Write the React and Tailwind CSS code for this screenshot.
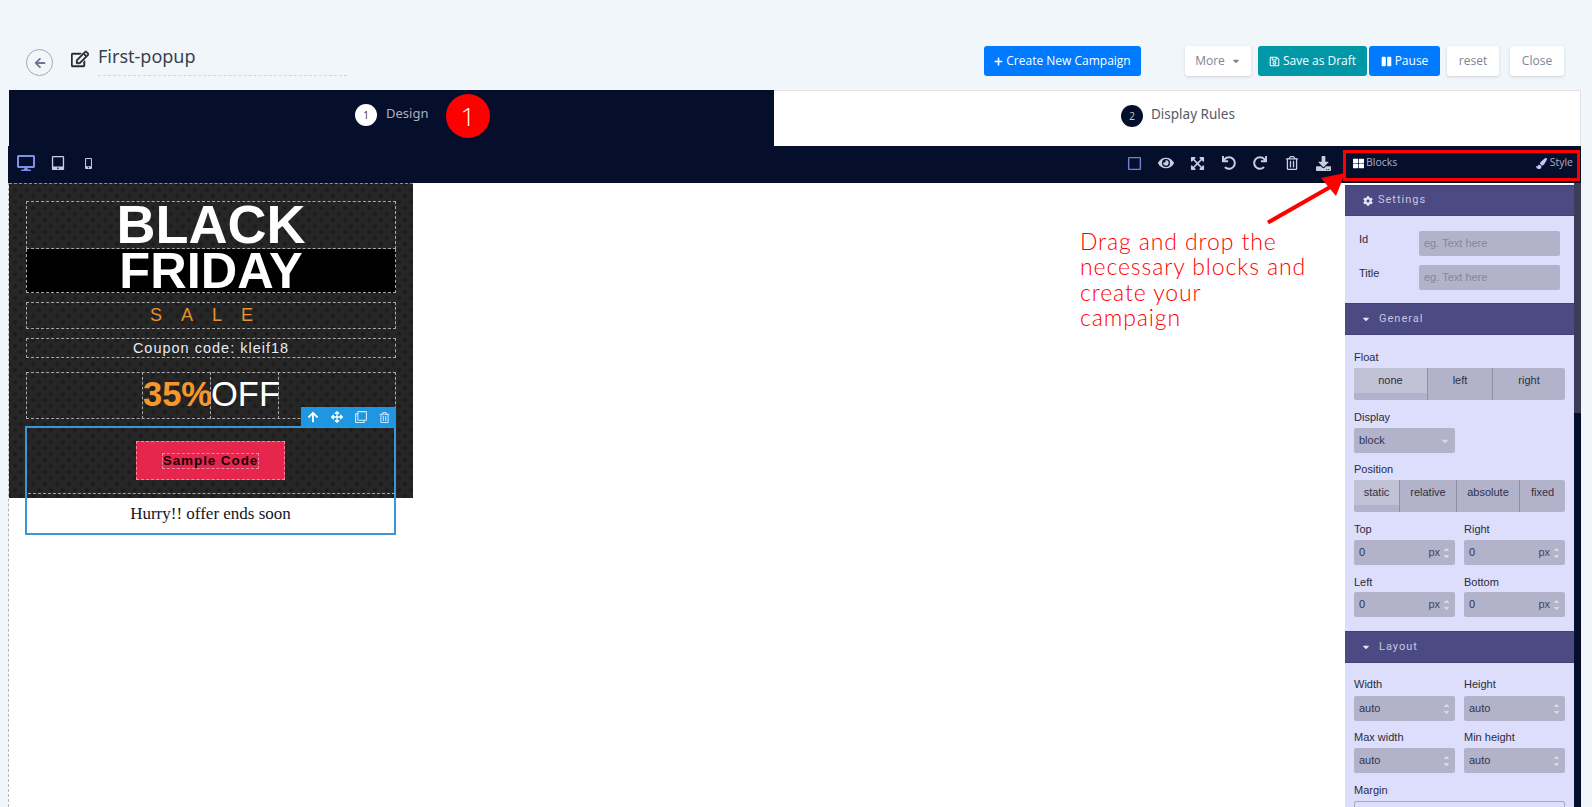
import React from "react";
import {
  FaArrowLeft, FaRegEdit, FaPlus, FaRegSave, FaPause, FaDesktop, FaTabletAlt, FaMobileAlt,
  FaRegSquare, FaEye, FaExpandArrowsAlt, FaUndo, FaRedo, FaRegTrashAlt, FaDownload, FaThLarge,
  FaPaintBrush, FaCog, FaArrowUp, FaArrowsAlt, FaRegClone, FaCaretDown, FaSortUp, FaSortDown,
} from "react-icons/fa";

const ui = "font-['Open_Sans','Noto_Sans',sans-serif]";
const panelFont = "font-['Liberation_Sans',Arial,sans-serif]";
const dash = "border border-dashed border-[#a8a8a8]";

function Btn({ className, children }) {
  return (
    <div className={`h-[30px] rounded-[3px] flex items-center justify-center gap-[3px] text-[12px] ${className}`}>
      {children}
    </div>
  );
}

function PanelHead({ icon, children, h }) {
  return (
    <div className={`${h} flex items-center bg-[#4c4a83] border-y border-[#43417a] text-[#c6c6e2] text-[11px] tracking-[1px] font-['Roboto',sans-serif]`}>
      {icon}
      {children}
    </div>
  );
}

function Caret() {
  return <FaCaretDown className="ml-[16px] mr-[8px] text-[#e5e5f5] text-[10px]" />;
}

function Label({ children, className = "" }) {
  return <div className={`text-[11px] leading-[13px] text-[#2b2b3a] ${className}`}>{children}</div>;
}

function Spin() {
  return (
    <span className="flex flex-col items-center text-[#d9d9e6] text-[9px] leading-none">
      <FaSortUp className="-mb-[6px]" />
      <FaSortDown />
    </span>
  );
}

function Field({ value, unit }) {
  return (
    <div className="w-[101px] h-[25px] rounded-[2px] bg-[#b2b3ca] flex items-center pl-[5px] pr-[4px] text-[11px] text-[#33334a]">
      <span className="flex-1">{value}</span>
      {unit && <span className="mr-[2px] text-[#45455c]">{unit}</span>}
      <Spin />
    </div>
  );
}

function LabeledField({ label, value, unit, mb = "mb-[4px]" }) {
  return (
    <div className="w-[101px]">
      <Label className={mb}>{label}</Label>
      <Field value={value} unit={unit} />
    </div>
  );
}

function Radio({ items }) {
  return (
    <div className="w-[211px] h-[32px] flex rounded-[2px] bg-[#b2b3ca] text-[11px] text-[#2f2f45]">
      {items.map((it, i) => (
        <div
          key={it.t}
          style={{ width: it.w }}
          className={`h-full text-center ${i < items.length - 1 ? "border-r border-[#8f90a8]" : ""}`}
        >
          <div className={`h-[25px] leading-[25px] ${i === 0 ? "bg-[#c0c1d4]" : ""}`}>{it.t}</div>
        </div>
      ))}
    </div>
  );
}

function TextInput({ label }) {
  return (
    <div className="flex h-[25px] pl-[14px]">
      <div className="w-[60px] text-[11px] leading-[17px] text-[#2b2b3a]">{label}</div>
      <div className="w-[141px] h-[25px] rounded-[2px] bg-[#b2b3ca] pl-[5px] text-[11px] leading-[25px] text-[#85859c]">eg. Text here</div>
    </div>
  );
}

function Panel() {
  return (
    <div className={`w-[229px] shrink-0 bg-[#dcdefc] overflow-hidden ${panelFont}`}>
      <div className="h-[2px] bg-white" />
      <PanelHead h="h-[31px]" icon={<FaCog className="ml-[18px] mr-[5px] text-[#e5e5f5] text-[10px]" />}>Settings</PanelHead>
      <div className="h-[87px] pt-[15px]">
        <TextInput label="Id" />
        <div className="h-[9px]" />
        <TextInput label="Title" />
      </div>
      <PanelHead h="h-[32px]" icon={<Caret />}>General</PanelHead>
      <div className="pl-[9px] pt-[16px] h-[296px]">
        <Label className="mb-[4px]">Float</Label>
        <Radio items={[{ t: "none", w: 74 }, { t: "left", w: 65 }, { t: "right", w: 72 }]} />
        <Label className="mt-[11px] mb-[4px]">Display</Label>
        <div className="w-[101px] h-[25px] rounded-[2px] bg-[#b2b3ca] flex items-center pl-[5px] pr-[5px] text-[11px] text-[#33334a]">
          <span className="flex-1">block</span>
          <FaCaretDown className="text-[#d9d9e6] text-[10px]" />
        </div>
        <Label className="mt-[10px] mb-[4px]">Position</Label>
        <Radio items={[{ t: "static", w: 46 }, { t: "relative", w: 57 }, { t: "absolute", w: 63 }, { t: "fixed", w: 45 }]} />
        <div className="flex gap-[9px] mt-[11px]">
          <LabeledField label="Top" value="0" unit="px" />
          <LabeledField label="Right" value="0" unit="px" />
        </div>
        <div className="flex gap-[9px] mt-[11px]">
          <LabeledField label="Left" value="0" unit="px" mb="mb-[3px]" />
          <LabeledField label="Bottom" value="0" unit="px" mb="mb-[3px]" />
        </div>
      </div>
      <PanelHead h="h-[32px]" icon={<Caret />}>Layout</PanelHead>
      <div className="pl-[9px] pt-[15px]">
        <div className="flex gap-[9px]">
          <LabeledField label="Width" value="auto" mb="mb-[5px]" />
          <LabeledField label="Height" value="auto" mb="mb-[5px]" />
        </div>
        <div className="flex gap-[9px] mt-[10px]">
          <LabeledField label="Max width" value="auto" />
          <LabeledField label="Min height" value="auto" />
        </div>
        <Label className="mt-[11px] mb-[4px]">Margin</Label>
        <div className="w-[211px] h-[40px] rounded-[2px] border border-[#a5a6be]" />
      </div>
    </div>
  );
}

function Popup() {
  return (
    <div
      className={`w-[404px] h-[315px] pl-[17px] pt-[17px] border-t border-dashed border-[#8a8f9c] bg-[#262626] bg-[radial-gradient(circle,#181818_0px,transparent_3px),radial-gradient(circle,#181818_0px,transparent_3px)] bg-[length:12px_12px] bg-[position:0_0,6px_6px] font-['Liberation_Sans',Arial,sans-serif]`}
    >
      <div className={`w-[370px] h-[48px] ${dash} text-white font-bold text-[54px] leading-[44px] text-center`}>BLACK</div>
      <div className="w-[370px] h-[44px] border-b border-x border-dashed border-[#a8a8a8] bg-black text-white font-bold text-[50.5px] leading-[43px] text-center">FRIDAY</div>
      <div className={`w-[370px] h-[27px] mt-[9px] ${dash} text-[#e8912d] text-[18px] leading-[24px] tracking-[19px] text-center`}>SALE</div>
      <div className={`w-[370px] h-[20px] mt-[9px] ${dash} text-[#e6ecf5] text-[14.5px] leading-[18px] tracking-[1px] text-center`}>Coupon code: kleif18</div>
      <div className={`w-[370px] h-[47px] mt-[14px] ${dash} flex justify-center text-[34.5px] leading-[44px] pr-[1px]`}>
        <div className="w-[69px] border-x border-dashed border-[#a8a8a8] -my-px text-[#f7962d] font-bold text-center">35%</div>
        <div className="w-[68px] border-r border-dashed border-[#a8a8a8] -my-px text-white text-center">OFF</div>
      </div>
      <div className="relative -ml-[1px] mt-[7px] w-[371px] h-[109px] border-2 border-[#3a96d4]">
        <div className="absolute -top-[21px] -right-[2px] w-[95px] h-[20px] bg-[#1f97e0] flex items-center justify-around text-white text-[12px]">
          <FaArrowUp />
          <FaArrowsAlt />
          <FaRegClone className="text-[#cfe8f8]" />
          <FaRegTrashAlt className="text-[#cfe8f8] text-[11px]" />
        </div>
        <div className="mt-[13px] ml-[109px] w-[149px] h-[39px] bg-[#e6264c] border border-dashed border-[#f08aa0] flex items-center justify-center">
          <span className="h-[16px] border border-dashed border-[#f08aa0] text-[13.5px] leading-[14px] font-bold tracking-[0.9px] text-[#17040c]">Sample Code</span>
        </div>
        <div className="mt-[13px] ml-[1px] w-[367px] border-t border-dashed border-[#a8a8a8]" />
        <div className="pt-[8px] text-center text-[17px] leading-[24px] text-[#14141f] font-['Liberation_Serif',serif]">Hurry!! offer ends soon</div>
      </div>
    </div>
  );
}

function ToolIcon({ children }) {
  return <div className="w-[31.5px] flex justify-center">{children}</div>;
}

export default function App() {
  return (
    <div className={`relative w-[1592px] h-[807px] overflow-hidden bg-[#f1f6fb] ${ui}`}>
      {/* header */}
      <div className="h-[90px] flex pt-[46px] pl-[26px] pr-[28px]">
        <div className="w-[27px] h-[27px] mt-[3px] rounded-full border border-[#9fa7bb] flex items-center justify-center text-[#6b7690] text-[12px]">
          <FaArrowLeft />
        </div>
        <FaRegEdit className="ml-[18px] mt-[4px] text-[18px] text-[#2a2a2a]" stroke="currentColor" strokeWidth={14} />
        <div className="ml-[9px] w-[249px] h-[30px] border-b border-dashed border-[#d3d6da] text-[18px] leading-[20px] text-[#3a3f4d] font-['Noto_Sans',sans-serif]">First-popup</div>
        <div className="flex-1" />
        <Btn className="w-[157px] bg-[#007bff] text-white"><FaPlus className="text-[9px]" />Create New Campaign</Btn>
        <Btn className="w-[66px] ml-[44px] bg-white text-[#7c8596] shadow-[0_1px_3px_rgba(0,0,0,0.15)]">More <FaCaretDown className="ml-[3px] text-[10px]" /></Btn>
        <Btn className="w-[109px] ml-[7px] bg-[#0097a7] text-white"><FaRegSave className="text-[11px]" />Save as Draft</Btn>
        <Btn className="w-[71px] ml-[2px] bg-[#007bff] text-white"><FaPause className="text-[11px]" />Pause</Btn>
        <Btn className="w-[52px] ml-[7px] bg-white text-[#7c8596] shadow-[0_1px_3px_rgba(0,0,0,0.15)]">reset</Btn>
        <Btn className="w-[54px] ml-[11px] bg-white text-[#7c8596] shadow-[0_1px_3px_rgba(0,0,0,0.15)]">Close</Btn>
      </div>

      {/* tabs */}
      <div className="ml-[9px] w-[1572px] h-[56px] flex font-['Noto_Sans',sans-serif] text-[13px]">
        <div className="w-[765px] bg-[#050f2c] flex pt-[14px] pl-[346px] text-[#aab0c2]">
          <div className="w-[22px] h-[22px] rounded-full bg-white text-[#444] text-[10px] flex items-center justify-center">1</div>
          <div className="ml-[9px] leading-[18px]">Design</div>
        </div>
        <div className="flex-1 bg-white flex pt-[14px] pl-[347px] text-[13.5px] text-[#555a66] border-r border-t border-[#dfe2e6]">
          <div className="w-[22px] h-[22px] rounded-full bg-[#050f2c] text-[#bfc4d2] text-[10px] flex items-center justify-center">2</div>
          <div className="ml-[8px] leading-[18px]">Display Rules</div>
        </div>
      </div>

      {/* toolbar */}
      <div className="ml-[8px] w-[1573px] h-[37px] pb-[3px] bg-[#050f2c] flex items-center pl-[9px] text-[#c8cde0]">
        <FaDesktop className="text-[18px] text-[#7f8fe8]" />
        <FaTabletAlt className="ml-[16px] text-[14px]" />
        <FaMobileAlt className="ml-[18px] text-[11px]" />
        <div className="flex-1" />
        <ToolIcon><FaRegSquare className="text-[15px] text-[#6d82d8]" /></ToolIcon>
        <ToolIcon><FaEye className="text-[16px]" /></ToolIcon>
        <ToolIcon><FaExpandArrowsAlt className="text-[15px]" /></ToolIcon>
        <ToolIcon><FaUndo className="text-[14px]" /></ToolIcon>
        <ToolIcon><FaRedo className="text-[14px]" /></ToolIcon>
        <ToolIcon><FaRegTrashAlt className="text-[14px]" /></ToolIcon>
        <ToolIcon><FaDownload className="text-[15px]" /></ToolIcon>
        <div className="w-[220px] ml-[14px] mr-[8px] flex items-center justify-between text-[10.5px] text-[#a9aecb]">
          <span className="flex items-center gap-[2px]"><FaThLarge className="text-white text-[11px]" />Blocks</span>
          <span className="flex items-center gap-[3px]"><FaPaintBrush className="text-[#c3c8f0] text-[11px]" />Style</span>
        </div>
      </div>

      {/* body */}
      <div className="ml-[8px] w-[1573px] h-[624px] flex overflow-hidden">
        <div className="w-[1337px] shrink-0 bg-white border-l border-dashed border-[#b5b5b5]">
          <Popup />
        </div>
        <Panel />
        <div className="w-[7px] shrink-0 flex flex-col bg-[#050f2c]">
          <div className="h-[230px] bg-[#3a3d55]" />
        </div>
      </div>

      {/* annotation */}
      <div className="absolute left-[1080px] top-[229px] text-[#ff0000] text-[23px] leading-[25.3px] font-light font-['Lato',sans-serif] tracking-[0.9px]">
        <div>Drag and drop the</div>
        <div>necessary blocks and</div>
        <div>create your</div>
        <div>campaign</div>
      </div>
      <div className="absolute left-[446px] top-[94px] w-[44px] h-[44px] rounded-full bg-[#ff0000] text-white text-[26px] font-light flex items-center justify-center">1</div>
      <div className="absolute left-[1343px] top-[150px] w-[237px] h-[31px] border-[3px] border-[#ff0000]" />
      <svg className="absolute left-[1260px] top-[165px]" width="100" height="65" viewBox="0 0 100 65">
        <line x1="8" y1="57.5" x2="72" y2="21" stroke="#ff0000" strokeWidth="4" />
        <polygon points="85,8 76,31 61,13" fill="#ff0000" />
      </svg>
    </div>
  );
}
